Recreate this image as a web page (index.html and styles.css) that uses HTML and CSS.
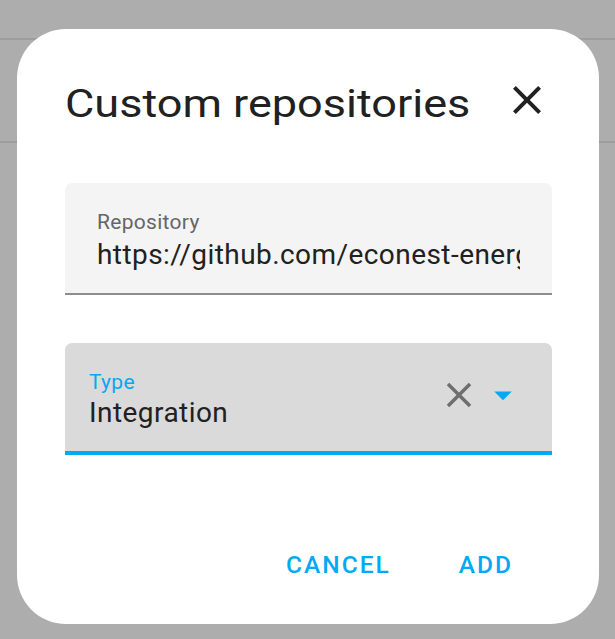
FILE: index.html
```html
<!DOCTYPE html>
<html lang="en">
<head>
<meta charset="utf-8">
<title>Custom repositories</title>
<link rel="stylesheet" href="styles.css">
</head>
<body>
<div class="page">
  <div class="toolbar"></div>
  <div class="section"></div>
</div>
<div class="dialog" role="dialog">
  <div class="header">
    <h2 class="title">Custom repositories</h2>
    <button class="close" aria-label="Close">
      <svg viewBox="0 0 24 24" width="48" height="48"><path d="M19,6.41L17.59,5L12,10.59L6.41,5L5,6.41L10.59,12L5,17.59L6.41,19L12,13.41L17.59,19L19,17.59L13.41,12L19,6.41Z" fill="#212121"/></svg>
    </button>
  </div>
  <div class="content">
    <div class="field field-text">
      <div class="label">Repository</div>
      <div class="value">https://github.com/econest-energy/hacs-econest</div>
    </div>
    <div class="field field-select">
      <div class="select-text">
        <div class="label label-active">Type</div>
        <div class="value">Integration</div>
      </div>
      <div class="icons">
        <svg class="icon" viewBox="0 0 24 24" width="42" height="42"><path d="M19,6.41L17.59,5L12,10.59L6.41,5L5,6.41L10.59,12L5,17.59L6.41,19L12,13.41L17.59,19L19,17.59L13.41,12L19,6.41Z" fill="#6e6e6e"/></svg>
        <svg class="icon" viewBox="0 0 24 24" width="42" height="42"><path d="M7,10L12,15L17,10H7Z" fill="#03a9f4"/></svg>
      </div>
    </div>
  </div>
  <div class="actions">
    <button class="btn">Cancel</button>
    <button class="btn">Add</button>
  </div>
</div>
</body>
</html>
```

FILE: styles.css
```css
html, body {
  margin: 0;
  padding: 0;
}
body {
  width: 615px;
  height: 639px;
  overflow: hidden;
  background: #adadad;
  font-family: Roboto, "Liberation Sans", sans-serif;
  position: relative;
}
.page {
  display: flex;
  flex-direction: column;
}
.toolbar {
  height: 38px;
  border-bottom: 2px solid #9d9d9d;
}
.section {
  height: 101px;
  border-bottom: 2px solid #9d9d9d;
}
.dialog {
  position: absolute;
  left: 17px;
  top: 29px;
  width: 582px;
  height: 595px;
  background: #fff;
  border-radius: 49px;
  display: flex;
  flex-direction: column;
  box-sizing: border-box;
}
.header {
  display: flex;
  align-items: flex-start;
  justify-content: space-between;
  padding: 51px 48px 0 48px;
}
.title {
  margin: 0;
  font-size: 39px;
  font-weight: 400;
  line-height: 48px;
  color: #212121;
  transform: scaleX(1.155);
  transform-origin: left center;
}
.close {
  border: 0;
  background: none;
  padding: 0;
  margin-top: -4px;
  width: 48px;
  height: 48px;
  display: flex;
}
.content {
  display: flex;
  flex-direction: column;
  gap: 48px;
  padding: 55px 47px 0 48px;
}
.field {
  height: 112px;
  box-sizing: border-box;
  border-radius: 7px 7px 0 0;
}
.field-text {
  background: #f4f4f4;
  border-bottom: 2px solid #8e8e8e;
  padding: 27px 32px 0 32px;
  overflow: hidden;
}
.field-select {
  background: #dadada;
  border-bottom: 4px solid #03a9f4;
  display: flex;
  align-items: center;
  padding: 0 28px 0 24px;
}
.select-text {
  flex: 1;
  align-self: flex-start;
  padding-top: 27px;
}
.label {
  font-size: 21px;
  line-height: 24px;
  letter-spacing: 0.3px;
  color: #666;
}
.label-active {
  color: #03a9f4;
}
.value {
  margin-top: 5px;
  font-size: 28px;
  line-height: 32px;
  letter-spacing: 0.44px;
  color: #212121;
  white-space: nowrap;
  overflow: hidden;
}
.field-select .value {
  margin-top: 3px;
}
.icons {
  display: flex;
  gap: 2px;
  margin-top: -4px;
}
.icon {
  display: block;
}
.actions {
  display: flex;
  justify-content: flex-end;
  gap: 40px;
  padding: 78px 72px 0 0;
}
.btn {
  border: 0;
  background: none;
  font-family: Roboto, "Liberation Sans", sans-serif;
  font-weight: 500;
  font-size: 24.5px;
  letter-spacing: 2px;
  text-transform: uppercase;
  color: #03a9f4;
  height: 63px;
  line-height: 62px;
  padding: 0 14px;
}
```
